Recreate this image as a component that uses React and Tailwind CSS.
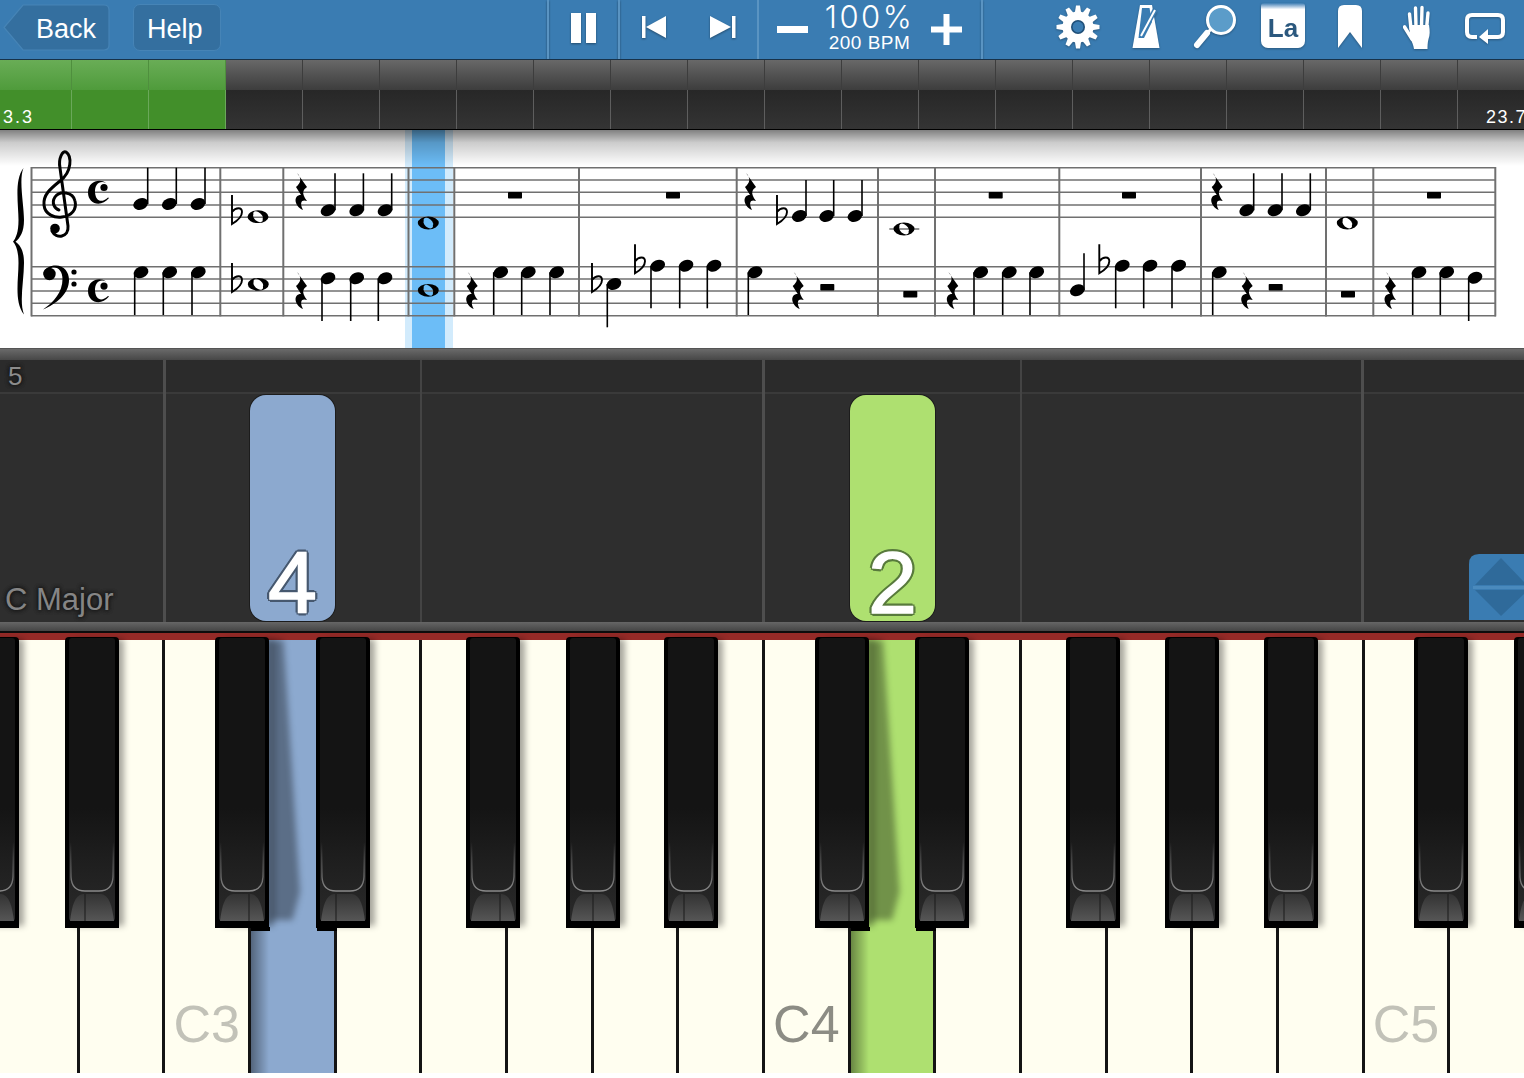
import React from 'react';

// score data, all in page x / section-local y (section starts at y=130)
const Y0 = 130;
const trebleLines = [167.7, 180, 192.3, 205, 217.3];
const bassLines = [266.7, 279, 291, 303.3, 315.7];
const bars = [31.5, 220.3, 283.3, 408.5, 454.3, 579, 736.7, 878, 935, 1059.3, 1201, 1326, 1373.3, 1495.3];

// [headX, headY, stemX, stemY]
const quarters = [
  [140.7, 204, 147.7, 167.7], [169.3, 204, 176.3, 167.7], [198, 204, 205, 167.7],
  [328, 210.3, 335, 173.3], [356.7, 210.3, 363.4, 173.3], [385, 210.3, 391.7, 173.3],
  [799.3, 216, 806, 180], [826.7, 216, 833.7, 180], [855, 216, 862, 180],
  [1246.7, 210.3, 1253.7, 173.3], [1275, 210.3, 1282, 173.3], [1303.3, 210.3, 1310.3, 173.3],
  [141, 272.3, 134.7, 315], [169.7, 272.3, 163.3, 315], [198.3, 272.3, 192, 315],
  [328, 278.3, 322, 321], [356.7, 278.3, 350.7, 321], [385, 278.3, 378.3, 321],
  [500.7, 272.3, 493.7, 315], [528.3, 272.3, 521.7, 315], [556.7, 272.3, 550, 315],
  [614, 284, 607.3, 327.3],
  [657.7, 265.7, 651, 308.3], [686, 265.7, 679.7, 308.3], [714, 265.7, 707.3, 308.3],
  [755, 272.3, 748.3, 315],
  [980.7, 272.3, 974, 315], [1009.3, 272.3, 1002.7, 315], [1036.7, 272.3, 1030, 315],
  [1077.3, 290.3, 1084, 253.3],
  [1122.3, 265.7, 1115.7, 308.3], [1150, 265.7, 1143.7, 308.3], [1178.7, 265.7, 1172, 308.3],
  [1219.3, 272.3, 1212.7, 315],
  [1419, 272.3, 1412.7, 315], [1446.7, 272.3, 1440.3, 315], [1475, 277.7, 1468.7, 321],
];
const wholes = [[258, 216.7], [428.3, 223], [904, 229], [1347.3, 223], [258.3, 284.3], [428.3, 290.3]];
const flats = [[232, 195], [777, 195], [232, 263], [592, 263], [635, 244.3], [1099.3, 244.3]];
const quarterRests = [[301, 173], [750, 173], [1216.7, 173], [301, 272], [471.7, 272], [797.7, 272], [952.3, 272], [1246.7, 272], [1390, 272]];
const blockRests = [
  [508, 192], [666, 192], [988.7, 192], [1122, 192], [1427, 192],
  [820.3, 284], [903.3, 291], [1268.7, 284], [1341, 291],
];

function ScoreDrawing() {
  return (
    <svg width="1524" height="218" viewBox={`0 ${Y0} 1524 218`} className="absolute inset-0">
      {/* brace */}
      <path d="M23.5 168C14 180 18.5 205 18.5 220C18.5 232 16 238 13 241.7C16 245 18.5 251 18.5 263C18.5 280 14 302 24 314.5C19 302 24 280 24 263C24 250 20 245 15.5 241.7C20 238 24 232 24 220C24 205 18.5 180 23.5 168Z" />
      {[...trebleLines, ...bassLines].map((l) => (
        <line key={l} x1="31" x2="1496" y1={l} y2={l} stroke="#707070" strokeWidth="1.6" />
      ))}
      {bars.map((b) => (
        <line key={b} x1={b} x2={b} y1="167" y2="316.4" stroke="#707070" strokeWidth="2" />
      ))}
      <line x1="889.3" x2="919.3" y1="229" y2="229" stroke="#666" strokeWidth="1.4" />

      {/* treble clef */}
      <path
        d="M52 231C56 239 69 238 68 226L60 168C58 158 63 150 66 152C72 156 72 172 60 181C50 189 43 195 44 205C45 215 55 218 62 217C72 216 77 209 75 201C73 192 60 190 55 197C51 203 55 209 59 210"
        fill="none"
        stroke="#000"
        strokeWidth="3"
        strokeLinecap="round"
      />
      <circle cx="55" cy="228.5" r="4.8" />
      {/* bass clef */}
      <path d="M43.5 275C43 268 50 265.5 56 265.5C64 265.5 69 272 69 280C69 294 56 304 43 309.5C54 302 62.5 292 62.5 279C62.5 272 59 267.5 54 267.5C50 267.5 47.5 270 47 272Z" />
      <circle cx="49.5" cy="274" r="6.2" />
      <circle cx="74" cy="272" r="2.6" />
      <circle cx="74" cy="284" r="2.6" />
      {/* common time */}
      {[0, 98.6].map((dy) => (
        <g key={dy} transform={`translate(0 ${dy})`}>
          <path d="M106 183C100 178 88 181 88 192.5C88 204 101 208 109 198L108 197.5C102 203 96 202 95 192.5C94.5 184 100 180 106 183Z" />
          <circle cx="104" cy="187.5" r="3.6" />
        </g>
      ))}

      {quarters.map(([hx, hy, sx, sy]) => (
        <g key={`${hx}-${hy}`}>
          <ellipse cx={hx} cy={hy} rx="7.6" ry="5.6" transform={`rotate(-22 ${hx} ${hy})`} />
          <line x1={sx} x2={sx} y1={sy} y2={hy} stroke="#000" strokeWidth="1.6" />
        </g>
      ))}
      {wholes.map(([x, v]) => (
        <path
          key={`${x}-${v}`}
          fillRule="evenodd"
          d={`M${x - 10.5} ${v}A10.5 6.4 0 1 0 ${x + 10.5} ${v}A10.5 6.4 0 1 0 ${x - 10.5} ${v}ZM${x - 4.6} ${v - 2.2}A5.6 3.3 40 1 0 ${x + 4.6} ${v + 2.2}A5.6 3.3 40 1 0 ${x - 4.6} ${v - 2.2}Z`}
        />
      ))}
      {flats.map(([x, v]) => (
        <path
          key={`${x}-${v}`}
          fill="none"
          stroke="#000"
          strokeWidth="1.9"
          d={`M${x} ${v}L${x} ${v + 29}C${x + 5} ${v + 26} ${x + 10} ${v + 22} ${x + 10} ${v + 17}C${x + 10} ${v + 12} ${x + 4} ${v + 12} ${x} ${v + 17}`}
        />
      ))}
      {quarterRests.map(([x, t]) => (
        <path
          key={`${x}-${t}`}
          d={`M${x - 4} ${t}L${x + 6} ${t + 14}C${x + 2} ${t + 17} ${x} ${t + 20} ${x + 6} ${t + 28}C${x + 1} ${t + 26} ${x - 2} ${t + 29} ${x + 2} ${t + 37}C${x - 7} ${t + 33} ${x - 8} ${t + 22} ${x} ${t + 22}L${x - 5} ${t + 14}C${x} ${t + 10} ${x + 1} ${t + 5} ${x - 4} ${t}Z`}
        />
      ))}
      {blockRests.map(([x, t]) => (
        <rect key={`${x}-${t}`} x={x} y={t} width="14" height="6.6" rx="0.8" />
      ))}
    </svg>
  );
}

function Toolbar() {
  return (
    <div className="flex h-[59px] bg-[#3a7cb2] text-white">
      <div className="flex w-[547px] items-start gap-[23px] pl-[3px] pt-[4px]">
        <div className="relative flex h-[47px] w-[107px] items-center justify-end pr-[14px] text-[27px]">
          <svg width="107" height="47" className="absolute inset-0">
            <path d="M1 23.5L20 1H101Q106 1 106 6V41Q106 46 101 46H20Z" fill="#346f9f" stroke="#4684b6" strokeWidth="1.2" />
          </svg>
          <span className="relative mt-[4px]">Back</span>
        </div>
        <div className="flex h-[47px] w-[88px] items-center rounded-[7px] border border-[#4684b6] bg-[#346f9f] pl-[13px] text-[27px]">
          <span className="mt-[4px]">Help</span>
        </div>
      </div>

      <div className="flex w-[71px] items-center justify-center border-l-2 border-[#5a94c2] drop-shadow-[0_1px_1px_rgba(0,0,0,0.4)]">
        <svg width="26" height="30" className="mb-[3px]">
          <rect x="0" y="0" width="10" height="30" fill="#fff" />
          <rect x="15" y="0" width="10" height="30" fill="#fff" />
        </svg>
      </div>

      <div className="flex w-[139px] items-center gap-[44px] border-l-2 border-[#5a94c2] pb-[5px] pl-[22px] drop-shadow-[0_1px_1px_rgba(0,0,0,0.4)]">
        <svg width="24" height="22">
          <rect x="0" y="0" width="3.5" height="22" fill="#fff" />
          <path d="M24 0V22L4 11Z" fill="#fff" />
        </svg>
        <svg width="26" height="22">
          <path d="M0 0V22L21 11Z" fill="#fff" />
          <rect x="22" y="0" width="3.5" height="22" fill="#fff" />
        </svg>
      </div>

      <div className="flex w-[224px] items-center border-l-2 border-[#5a94c2] pl-[18px]">
        <svg width="31" height="7" className="mb-[1px]">
          <rect width="31" height="7" fill="#fff" />
        </svg>
        <div className="mb-[3px] flex w-[123px] flex-col items-center gap-[3px]">
          <span className="font-['Inter',sans-serif] text-[31px] font-light leading-[27px] tracking-[2.5px]">100%</span>
          <span className="text-[19px] leading-[20px] tracking-[0.5px]">200 BPM</span>
        </div>
        <svg width="31" height="31" className="mb-[1px]">
          <path d="M12.5 0H18.5V12.5H31V18.5H18.5V31H12.5V18.5H0V12.5H12.5Z" fill="#fff" />
        </svg>
      </div>

      <div className="flex flex-1 items-start border-l-2 border-[#5a94c2] pl-[73px] pt-[5px] drop-shadow-[0_1px_1px_rgba(0,0,0,0.3)]">
        {/* gear */}
        <svg width="44" height="44" viewBox="-22 -22 44 44">
          {[0, 30, 60, 90, 120, 150, 180, 210, 240, 270, 300, 330].map((a) => (
            <path key={a} d="M-3.2 -14L-2 -21.5H2L3.2 -14Z" fill="#fff" transform={`rotate(${a})`} />
          ))}
          <circle r="15.5" fill="#fff" />
          <circle r="7" fill="#1f4f78" />
          <circle r="5.4" fill="#3a7cb2" />
        </svg>
        {/* metronome */}
        <svg width="28" height="43" className="ml-[32px]">
          <path d="M8 0H20L27.5 43H0.5Z" fill="#fff" />
          <path d="M10 3H17.5L20 17L12 33H6.5Z" fill="#3a7cb2" />
          <path d="M9 31L23 5" stroke="#3a7cb2" strokeWidth="5" />
          <path d="M9 31L23 5" stroke="#fff" strokeWidth="2" />
        </svg>
        {/* magnifier */}
        <svg width="45" height="44" className="ml-[33px]">
          <circle cx="28" cy="15" r="13.5" fill="#5b9cc9" stroke="#fff" strokeWidth="3" />
          <path d="M18 24L5 39" stroke="#fff" strokeWidth="3" />
          <path d="M14 28L4 40" stroke="#fff" strokeWidth="6" strokeLinecap="round" />
        </svg>
        {/* lyrics */}
        <div className="ml-[23px] -mt-[2px] flex h-[45px] w-[44px] items-center justify-center rounded-b-[7px] rounded-t-[3px] bg-gradient-to-b from-[#3a7cb2] from-[0%] via-white via-[14%] to-white text-[26px] font-bold leading-none text-[#2b587e]">
          <span className="mt-[5px]">La</span>
        </div>
        {/* bookmark */}
        <svg width="24" height="43" className="ml-[33px]">
          <path d="M0 6Q0 0 6 0H18Q24 0 24 6V43L12 27L0 43Z" fill="#fff" />
        </svg>
        {/* hand */}
        <svg width="32" height="44" className="ml-[41px]">
          <path d="M8 24L6.5 9M13 22L12.5 3M18.5 22L19 2.5M23.5 24L25 8" stroke="#fff" strokeWidth="3.4" strokeLinecap="round" />
          <path d="M9 34L1.5 22" stroke="#fff" strokeWidth="3.6" strokeLinecap="round" />
          <path d="M6.5 20H26C27 26 27 30 25.5 34C24.5 38 24.5 41 24.5 44H11C10.5 40 9 37 7 33Z" fill="#fff" />
        </svg>
        {/* loop */}
        <svg width="42" height="32" className="ml-[30px] mt-[8px]">
          <path d="M12 24H7Q2 24 2 19V7Q2 2 7 2H33Q38 2 38 7V19Q38 24 33 24H22" fill="none" stroke="#fff" strokeWidth="4" />
          <path d="M14 24L23 16V31Z" fill="#fff" />
        </svg>
      </div>
    </div>
  );
}

const ticks = Array.from({ length: 21 }, (_, i) => i);

function Timeline() {
  return (
    <div className="relative h-[71px] overflow-hidden border-y border-t-[#17324a] border-b-black">
      <div className="-ml-[5px] flex h-full">
        {ticks.map((i) => (
          <div key={i} className="flex w-[77px] shrink-0 flex-col">
            <div
              className={
                i < 3
                  ? 'h-[30px] border-r border-[#4f8f3e] bg-gradient-to-b from-[#69ad56] to-[#4f9b3b]'
                  : 'h-[30px] border-r border-[#3d3d3d] bg-gradient-to-b from-[#686868] to-[#3d3d3d]'
              }
            />
            <div
              className={
                i < 3
                  ? 'flex-1 border-r border-[#6aa85a] bg-[#428f2a]'
                  : 'flex-1 border-r border-[#5e5e5e] bg-gradient-to-b from-[#272727] to-[#343434]'
              }
            />
          </div>
        ))}
      </div>
      <span className="absolute bottom-[2px] left-[3px] text-[18px] leading-[20px] tracking-[2px] text-white">3.3</span>
      <span className="absolute bottom-[2px] left-[1486px] whitespace-nowrap text-[18px] leading-[20px] tracking-[1.5px] text-white">23.7</span>
    </div>
  );
}

function Score() {
  return (
    <div className="relative h-[218px] bg-white">
      <div className="absolute inset-y-0 left-[405px] w-[48px] bg-[#d2ebfc]" />
      <div className="absolute inset-y-0 left-[412px] w-[33px] bg-[#6cbdf7]" />
      <ScoreDrawing />
      <div className="absolute inset-x-0 top-0 h-[36px] bg-gradient-to-b from-black/50 via-black/20 via-[35%] to-transparent" />
    </div>
  );
}

function FallingNote({ className, color, outline, children }) {
  return (
    <div
      className={`absolute top-[35px] flex h-[226px] w-[85px] items-end justify-center rounded-[16px] shadow-[0_0_0_1px_#1c1c1c] ${className} ${color}`}
    >
      <span className={`text-[88px] leading-[76px] text-white [-webkit-text-stroke:1.5px_#fff] ${outline}`}>{children}</span>
    </div>
  );
}

function NoteLane() {
  return (
    <div className="relative h-[262px] bg-[#2e2e2e]">
      <div className="absolute inset-x-0 top-0 h-[34px] border-b-2 border-[#3a3a3a] bg-[#2b2b2b]" />
      <div className="absolute inset-y-0 left-[163px] w-[3px] bg-[#4e4e4e]" />
      <div className="absolute inset-y-0 left-[420px] w-[2px] bg-[#444]" />
      <div className="absolute inset-y-0 left-[762px] w-[3px] bg-[#4e4e4e]" />
      <div className="absolute inset-y-0 left-[1020px] w-[2px] bg-[#444]" />
      <div className="absolute inset-y-0 left-[1361px] w-[3px] bg-[#4e4e4e]" />
      <span className="absolute left-[8px] top-[2px] text-[26px] leading-[28px] text-[#8c8c8c] [text-shadow:0_0_4px_#111,0_0_4px_#111]">5</span>
      <span className="absolute bottom-[4px] left-[5px] text-[31px] leading-[36px] text-[#858585] [text-shadow:0_0_4px_#111,0_0_4px_#111]">C Major</span>
      <FallingNote
        className="left-[250px]"
        color="bg-[#8ca9cf]"
        outline="[text-shadow:3px_0_0_#46586f,-3px_0_0_#46586f,0_3px_0_#46586f,0_-3px_0_#46586f,2px_2px_0_#46586f,-2px_2px_0_#46586f,2px_-2px_0_#46586f,-2px_-2px_0_#46586f]"
      >
        4
      </FallingNote>
      <FallingNote
        className="left-[850px]"
        color="bg-[#aee070]"
        outline="[text-shadow:3px_0_0_#587a3c,-3px_0_0_#587a3c,0_3px_0_#587a3c,0_-3px_0_#587a3c,2px_2px_0_#587a3c,-2px_2px_0_#587a3c,2px_-2px_0_#587a3c,-2px_-2px_0_#587a3c]"
      >
        2
      </FallingNote>
      <svg width="55" height="66" className="absolute bottom-[2px] right-0">
        <path d="M0 66V10Q0 0 10 0H55V66Z" fill="#3a7cb2" />
        <path d="M6 31L32 4L55 28V31Z" fill="#2f6a9a" />
        <path d="M6 36L32 62L55 40V36Z" fill="#2f6a9a" />
        <rect x="4" y="32" width="51" height="3" fill="#4a8abd" />
      </svg>
    </div>
  );
}

const whiteKeys = Array.from({ length: 19 }, (_, i) => i);
const labels = {
  2: { text: 'C3', color: 'text-[#c2c2b8]' },
  9: { text: 'C4', color: 'text-[#8c8c84]' },
  16: { text: 'C5', color: 'text-[#c2c2b8]' },
};

function WhiteKey({ index }) {
  const pressed = index === 3 ? 'bg-[#8ca9cf]' : index === 10 ? 'bg-[#aee070]' : null;
  const label = labels[index];
  return (
    <div
      className={`relative flex w-[85.67px] shrink-0 items-end justify-end border-r-[3px] border-[#141414] pb-[23px] pr-[8px] ${pressed || 'bg-[#fffef0]'}`}
    >
      {label && <span className={`text-[52px] leading-[52px] ${label.color}`}>{label.text}</span>}
      {pressed && (
        <>
          <div className="absolute left-[19px] top-0 h-[280px] w-[30px] blur-[3px]">
            <div className="h-full bg-black/35 [clip-path:polygon(0_0,45%_0,100%_90%,75%_100%,0_100%)]" />
          </div>
          <div className="absolute bottom-0 left-0 top-[291px] w-[18px] bg-gradient-to-r from-black/40 to-transparent" />
          <div className="absolute left-0 top-[287px] h-[4px] w-[19px] bg-black" />
          <div className="absolute -right-[3px] top-[287px] h-[4px] w-[20px] bg-black" />
        </>
      )}
    </div>
  );
}

function BlackKey({ left, line }) {
  return (
    <div className={`absolute top-[4px] h-[291px] w-[54px] rounded-t-[4px] bg-black shadow-[7px_0_6px_-2px_rgba(0,0,0,0.35)] ${left}`}>
      <svg width="54" height="291">
        <defs>
          <linearGradient id="keyBody" x1="0" y1="0" x2="0" y2="1">
            <stop offset="0.6" stopColor="#141414" />
            <stop offset="1" stopColor="#2a2a2a" />
          </linearGradient>
          <linearGradient id="keyEdge" x1="0" y1="0" x2="0" y2="1">
            <stop offset="0" stopColor="#666" stopOpacity="0" />
            <stop offset="0.6" stopColor="#5a5a5a" />
            <stop offset="1" stopColor="#8a8a8a" />
          </linearGradient>
          <linearGradient id="keyLip" x1="0" y1="0" x2="0" y2="1">
            <stop offset="0" stopColor="#333" />
            <stop offset="1" stopColor="#565656" />
          </linearGradient>
        </defs>
        <rect x="4" y="1" width="46" height="283" rx="3" fill="url(#keyBody)" />
        <path d="M5.5 205L6 240C6.5 250 12 254 20 254H34C42 254 47.5 250 48 240L48.5 205" fill="none" stroke="url(#keyEdge)" strokeWidth="1.4" />
        <path d="M18 257H36C44 258 47 268 49 284H5C7 268 10 258 18 257Z" fill="url(#keyLip)" />
        <line x1={line} x2={line} y1="257" y2="284" stroke="#1a1a1a" strokeWidth="1" />
      </svg>
    </div>
  );
}

const blackKeys = [
  { left: '-left-[35px]', line: 20 },
  { left: 'left-[65px]', line: 20 },
  { left: 'left-[215px]', line: 34 },
  { left: 'left-[316px]', line: 20 },
  { left: 'left-[466px]', line: 34 },
  { left: 'left-[566px]', line: 27 },
  { left: 'left-[664px]', line: 20 },
  { left: 'left-[815px]', line: 34 },
  { left: 'left-[915px]', line: 20 },
  { left: 'left-[1066px]', line: 34 },
  { left: 'left-[1165px]', line: 27 },
  { left: 'left-[1264px]', line: 20 },
  { left: 'left-[1414px]', line: 34 },
  { left: 'left-[1514px]', line: 20 },
];

function Keyboard() {
  return (
    <div className="relative overflow-hidden">
      <div className="h-[7px] bg-[#952a27]" />
      <div className="-ml-[6px] flex h-[433px]">
        {whiteKeys.map((i) => (
          <WhiteKey key={i} index={i} />
        ))}
      </div>
      {blackKeys.map((k) => (
        <BlackKey key={k.left} left={k.left} line={k.line} />
      ))}
    </div>
  );
}

export default function App() {
  return (
    <div className="h-[1078px] w-[1524px] overflow-hidden bg-white font-['Liberation_Sans',sans-serif]">
      <Toolbar />
      <Timeline />
      <Score />
      <div className="h-[12px] border-t border-[#555] bg-gradient-to-b from-[#6a6a6a] to-[#474747]" />
      <NoteLane />
      <div className="h-[11px] border-b-2 border-[#0c0c0c] bg-gradient-to-b from-[#666] to-[#454545]" />
      <Keyboard />
    </div>
  );
}
